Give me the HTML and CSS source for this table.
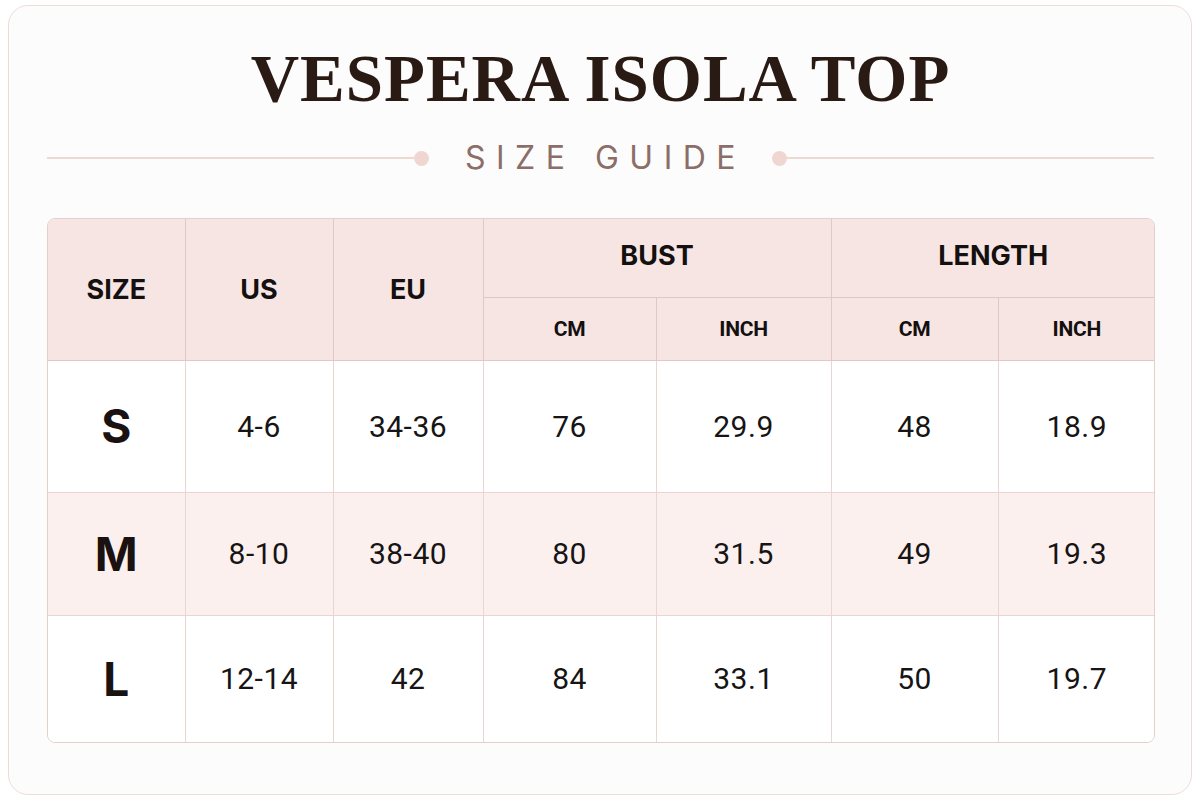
FILE: index.html
```html
<!DOCTYPE html>
<html lang="en">
<head>
<meta charset="utf-8">
<title>Vespera Isola Top – Size Guide</title>
<link rel="stylesheet" href="styles.css">
</head>
<body>
<main class="card">
  <h1 class="title">VESPERA ISOLA TOP</h1>
  <div class="subtitle-row">
    <span class="rule"></span><span class="dot"></span>
    <h2 class="subtitle">SIZE GUIDE</h2>
    <span class="dot"></span><span class="rule"></span>
  </div>
  <div class="table-wrap">
    <table class="sizes">
      <colgroup>
        <col class="c1"><col class="c2"><col class="c3"><col class="c4"><col class="c5"><col class="c6"><col class="c7">
      </colgroup>
      <thead>
        <tr class="h1">
          <th rowspan="2">SIZE</th>
          <th rowspan="2">US</th>
          <th rowspan="2">EU</th>
          <th colspan="2" class="grp">BUST</th>
          <th colspan="2" class="grp">LENGTH</th>
        </tr>
        <tr class="h2">
          <th class="sub">CM</th><th class="sub">INCH</th><th class="sub">CM</th><th class="sub">INCH</th>
        </tr>
      </thead>
      <tbody>
        <tr class="r1">
          <td class="size">S</td><td>4-6</td><td>34-36</td><td>76</td><td>29.9</td><td>48</td><td>18.9</td>
        </tr>
        <tr class="r2 alt">
          <td class="size">M</td><td>8-10</td><td>38-40</td><td>80</td><td>31.5</td><td>49</td><td>19.3</td>
        </tr>
        <tr class="r3">
          <td class="size">L</td><td>12-14</td><td>42</td><td>84</td><td>33.1</td><td>50</td><td>19.7</td>
        </tr>
      </tbody>
    </table>
  </div>
</main>
</body>
</html>
```
FILE: styles.css
```css
* { box-sizing: border-box; }
html, body { margin: 0; padding: 0; background: #ffffff; }
body { padding: 5px 8px; }

.card {
  width: 1184px;
  height: 790px;
  border: 1.5px solid #eddbd7;
  border-radius: 20px;
  background: #fdfcfc;
  padding: 32px 37px 0 38px;
  display: flex;
  flex-direction: column;
}

.title {
  margin: 0;
  text-align: center;
  font-family: "Liberation Serif", "Times New Roman", serif;
  font-weight: 700;
  font-size: 67px;
  line-height: 80px;
  letter-spacing: 1px;
  color: #2a1a14;
}

.subtitle-row {
  display: flex;
  align-items: center;
  margin-top: 23px;
  height: 34px;
}
.rule { flex: 1; height: 2px; background: #eed8d3; }
.dot { width: 15px; height: 15px; border-radius: 50%; background: #efd6d0; }
.subtitle {
  margin: 0 26px 0 36px;
  font-family: "Inter", "Roboto", sans-serif;
  font-weight: 400;
  font-size: 32px;
  line-height: 34px;
  letter-spacing: 10.5px;
  color: #8b6e68;
}

.table-wrap {
  margin-top: 43px;
  border: 1.5px solid #e4cfcb;
  border-radius: 8px;
  overflow: hidden;
  width: 1108px;
}
.sizes {
  width: 100%;
  border-collapse: collapse;
  table-layout: fixed;
}
.c1 { width: 137px; } .c2 { width: 148px; } .c3 { width: 150px; }
.c4 { width: 173px; } .c5 { width: 175px; } .c6 { width: 167px; } .c7 { width: 157px; }

.sizes th, .sizes td {
  border: 1px solid #e9d5d1;
  text-align: center;
  vertical-align: middle;
  padding: 0;
}
.sizes tr > :first-child { border-left: none; }
.sizes tr > :last-child { border-right: none; }
.sizes thead tr:first-child > * { border-top: none; }
.sizes tbody tr:last-child > * { border-bottom: none; }

.sizes th {
  background: #f6e5e3;
  border-color: #e0c9c5;
  font-family: "Inter", "Liberation Sans", sans-serif;
  font-weight: 700;
  color: #141010;
  font-size: 27px;
  letter-spacing: 0px;
}
.sizes th.grp { padding-bottom: 4px; }
.sizes .h1 { height: 78px; }
.sizes .h2 { height: 63px; }
.sizes th.sub {
  font-family: "Roboto", "Liberation Sans", sans-serif;
  font-size: 21px;
  font-weight: 700;
  letter-spacing: -0.3px;
}

.sizes td {
  font-family: "Roboto", "Liberation Sans", sans-serif;
  font-weight: 400;
  font-size: 30px;
  letter-spacing: 0.5px;
  color: #161414;
  background: #ffffff;
}
.sizes .alt td { background: #fcf0ef; }
.sizes .r1 { height: 132px; }
.sizes .r2 { height: 123px; }
.sizes .r3 { height: 127px; }
.sizes td.size {
  font-family: "Inter", "Liberation Sans", sans-serif;
  font-weight: 700;
  font-size: 46px;
  letter-spacing: 0;
  color: #1a1210;
}
```
